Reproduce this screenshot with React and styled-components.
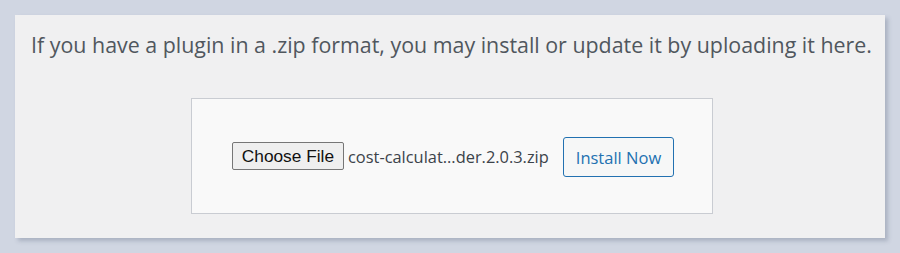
import React from "react";
import styled, { createGlobalStyle } from "styled-components";

const Global = createGlobalStyle`
  html, body {
    margin: 0;
    padding: 0;
    background: #d0d6e2;
  }
`;

const Page = styled.div`
  padding: 15px;
  width: 900px;
  height: 253px;
  box-sizing: border-box;
`;

const Panel = styled.div`
  width: 870px;
  height: 223px;
  box-sizing: border-box;
  background: #f0f0f1;
  box-shadow: 3px 3px 4px rgba(60, 70, 100, 0.25);
  display: flex;
  flex-direction: column;
  align-items: center;
  padding-top: 15px;
`;

const Intro = styled.p`
  margin: 0 0 0 3px;
  font-family: "Open Sans", "Noto Sans", sans-serif;
  font-size: 21.4px;
  line-height: 29px;
  color: #50575e;
  text-align: center;
  white-space: nowrap;
`;

const UploadBox = styled.form`
  margin: 39px 0 0 4px;
  width: 522px;
  height: 116px;
  box-sizing: border-box;
  background: #f9f9f9;
  border: 1px solid #c9ccd2;
  display: flex;
  align-items: center;
  justify-content: center;
  padding-left: 2px;
`;

const FilePicker = styled.div`
  display: flex;
  align-items: center;
  margin-right: 14px;
`;

const ChooseButton = styled.button`
  font-family: "Liberation Sans", Arial, sans-serif;
  font-size: 17.3px;
  color: #111;
  background: #efefef;
  border: 1px solid #767676;
  border-radius: 2px;
  height: 28px;
  padding: 0 9px;
  margin-right: 4px;
`;

const FileName = styled.span`
  font-family: "Open Sans", "Noto Sans", sans-serif;
  font-size: 16.4px;
  color: #3c434a;
`;

const InstallButton = styled.button`
  font-family: "Open Sans", "Noto Sans", sans-serif;
  font-size: 16.5px;
  color: #2271b1;
  background: #f6f7f7;
  border: 1px solid #2271b1;
  border-radius: 3px;
  height: 40px;
  padding: 0 12px;
  margin-top: 2px;
`;

export default function App() {
  return (
    <Page>
      <Global />
      <Panel>
        <Intro>
          If you have a plugin in a .zip format, you may install or update it by uploading it here.
        </Intro>
        <UploadBox onSubmit={(e) => e.preventDefault()}>
          <FilePicker>
            <ChooseButton type="button">Choose File</ChooseButton>
            <FileName>cost-calculat...der.2.0.3.zip</FileName>
          </FilePicker>
          <InstallButton type="submit">Install Now</InstallButton>
        </UploadBox>
      </Panel>
    </Page>
  );
}
